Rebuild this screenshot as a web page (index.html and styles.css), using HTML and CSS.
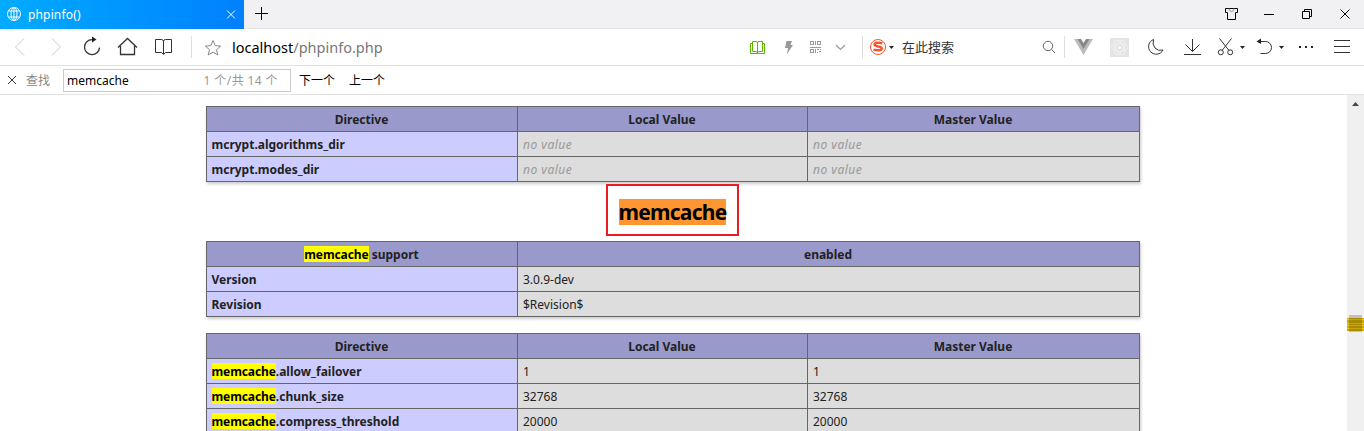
FILE: index.html
```html
<!DOCTYPE html>
<html lang="zh-CN">
<head>
<meta charset="utf-8">
<title>phpinfo()</title>
<link rel="stylesheet" href="styles.css">
</head>
<body>
<div class="browser">
  <header class="tabbar">
    <div class="tab">
      <svg width="28" height="29" viewBox="0 0 28 29" class="white"><circle cx="14" cy="14" r="6.5"/><ellipse cx="14" cy="14" rx="3" ry="6.5"/><path d="M8.5 11h11M8.5 17h11M14 7.5v13"/></svg>
      <span class="tab-title">phpinfo()</span>
      <svg width="22" height="29" viewBox="222 0 22 29" class="white"><path d="M227 10.5l8 8M235 10.5l-8 8"/></svg>
    </div>
    <svg width="36" height="28" viewBox="244 0 36 28" class="crisp black"><path d="M255 13.5h13M261.500 7v13"/></svg>
    <div class="window-buttons">
      <svg width="144" height="28" viewBox="1220 0 144 28" class="black"><path d="M1225.500 8.500h12v4h-2v7h-8v-7h-2z"/><path d="M1229 8.500q0 3 2.500 3t2.500-3" stroke="#999"/><path d="M1264 14.500h10M1302.500 11.500h7v7h-7zM1304.500 11v-1.500h7v7h-1.500"/><path d="M1340.500 9.500l9 9M1349.500 9.500l-9 9"/></svg>
    </div>
  </header>

  <nav class="toolbar">
    <svg width="70" height="36" viewBox="0 29 70 36" class="disabled"><path d="M24 38.500l-8.500 8.500 8.500 8.500M52 38.500l8.500 8.500-8.500 8.500"/></svg>
    <svg width="38" height="36" viewBox="70 29 38 36" class="thick"><path d="M94 39.600h-2a7.500 7.500 0 1 0 7.500 8"/><path d="M92 36.500l4.500 3-4.500 3z" class="fill"/></svg>
    <svg width="38" height="36" viewBox="108 29 38 36" class="thick"><path d="M118 47.500l9.500-9 9.500 9M120.500 46v8.500h14V46"/></svg>
    <svg width="38" height="36" viewBox="146 29 38 36"><path d="M155.500 39.500h6q2 0 2 2 0-2 2-2h6v13h-6l-2 2-2-2h-6zM163.500 41v13"/></svg>
    <svg width="48" height="36" viewBox="184 29 48 36"><path d="M191.500 36v22" class="divider"/><path d="M213 40.500l2.200 5.100 5.500.5-4.200 3.600 1.300 5.300-4.800-2.900-4.800 2.900 1.300-5.300-4.200-3.600 5.500-.5z" stroke="#888"/></svg>
    <span class="address">localhost<span class="path">/phpinfo.php</span></span>
    <svg width="35" height="36" viewBox="740 29 35 36" class="green"><path d="M752.500 51.500v-10h3.500q1.500 0 1.500 1.500 0-1.500 1.500-1.500h3.500v10H759l-1.500 1-1.500-1zM757.500 42v11.500M752 43.500h-1.500v10h14v-10H763"/></svg>
    <svg width="27" height="36" viewBox="775 29 27 36"><path d="M786.500 41h5.500l-1.500 4h2.500l-6 9 1-6h-3z" fill="#999" stroke="none"/></svg>
    <svg width="26" height="36" viewBox="802 29 26 36" class="gray crisp"><path d="M810.500 41.500h3v3h-3zM817.500 41.500h3v3h-3zM810.500 49.500h3v3h-3zM815.500 41v4M810 47.500h11M815.500 49v4M817 49.500h2M819 51.500h2M817 52.500h1M820 49.500h1"/></svg>
    <svg width="34" height="36" viewBox="828 29 34 36" class="gray"><path d="M836 45l4.500 4.500 4.500-4.500" stroke-width="1.200"/></svg>
    <svg width="40" height="36" viewBox="862 29 40 36"><path d="M862.500 36v22" class="divider"/><circle cx="878" cy="47" r="7.500" stroke="#f9552b"/><path d="M882.300 43.300c-2-.8-7.800-1.200-7.800 1.300s7.300 1.300 7.300 3.800-5.500 2.200-8.300 1.100" stroke="#f9552b" stroke-width="2.400"/><path d="M889 46h5l-2.500 3z" fill="#222" stroke="none"/></svg>
    <span class="search-hint">在此搜索</span>
    <svg width="32" height="36" viewBox="1036 29 32 36"><circle cx="1048" cy="46" r="4.700" stroke="#666"/><path d="M1051.500 49.500l3.500 3.500" stroke="#666"/><path d="M1064.500 36v22" class="divider"/></svg>
    <svg width="34" height="36" viewBox="1068 29 34 36"><path d="M1074 39h19l-9.500 16z" fill="#bbb" stroke="none"/><path d="M1077.500 39h3.500l2.500 4 2.500-4h3.500l-6 10z" fill="#888" stroke="none"/><path d="M1081 39h5l-2.500 4z" fill="#f5f5f5" stroke="none"/></svg>
    <svg width="36" height="36" viewBox="1102 29 36 36"><rect x="1110" y="38" width="19" height="19" rx="1" fill="#e4e4e4" stroke="none"/><g stroke="#f1f1f1"><ellipse cx="1119.500" cy="47.500" rx="8" ry="4"/><ellipse cx="1119.500" cy="47.500" rx="8" ry="4" transform="rotate(60 1119.500 47.500)"/><ellipse cx="1119.500" cy="47.500" rx="8" ry="4" transform="rotate(120 1119.500 47.500)"/></g><circle cx="1119.500" cy="47.500" r="1.500" fill="#fff" stroke="none"/></svg>
    <svg width="38" height="36" viewBox="1138 29 38 36"><path d="M1153.500 39.500a7.600 7.600 0 1 0 9.500 10.500q-5 1.500-8-2t-1.500-8.500z"/></svg>
    <svg width="36" height="36" viewBox="1176 29 36 36"><path d="M1192.500 39v12M1185.500 44.500l7 7 7-7M1184 54.500h17"/></svg>
    <svg width="40" height="36" viewBox="1212 29 40 36"><path d="M1219.500 38.500l9.500 12M1231.500 38.500l-9.500 12"/><circle cx="1220.800" cy="52.300" r="2.500"/><circle cx="1230.200" cy="52.300" r="2.500"/><path d="M1240 46h5l-2.500 3z" class="caret"/></svg>
    <svg width="40" height="36" viewBox="1252 29 40 36"><path d="M1258 41.500h7.500a6 6 0 0 1 0 12h-5"/><path d="M1256.500 41.500l4.500-3v5.500z" class="caret"/><path d="M1279 46h5l-2.500 3z" class="caret"/></svg>
    <svg width="32" height="36" viewBox="1292 29 32 36"><path d="M1299 46h2v2h-2zM1305 46h2v2h-2zM1311 46h2v2h-2z" class="caret"/></svg>
    <svg width="40" height="36" viewBox="1324 29 40 36"><path d="M1334 40.500h16M1334 46.500h16M1334 52.500h16"/></svg>
  </nav>

  <div class="findbar">
    <svg width="26" height="28" viewBox="0 66 26 28"><path d="M8 76l8 8M16 76l-8 8"/></svg>
    <span class="find-label">查找</span>
    <div class="find-box"><span class="find-term">memcache</span><span class="find-count">1 个/共 14 个</span></div>
    <span class="find-next">下一个</span>
    <span class="find-prev">上一个</span>
  </div>

  <div class="viewport">
    <main class="page">
      <div class="table three">
        <div class="h">Directive</div><div class="h">Local Value</div><div class="h">Master Value</div>
        <div class="e">mcrypt.algorithms_dir</div><div class="v"><i>no value</i></div><div class="v"><i>no value</i></div>
        <div class="e">mcrypt.modes_dir</div><div class="v"><i>no value</i></div><div class="v"><i>no value</i></div>
      </div>
      <h2 class="module"><span class="current">memcache</span></h2>
      <div class="table two">
        <div class="h"><mark>memcache</mark> support</div><div class="h">enabled</div>
        <div class="e">Version</div><div class="v">3.0.9-dev</div>
        <div class="e">Revision</div><div class="v">$Revision$</div>
      </div>
      <div class="table three last">
        <div class="h">Directive</div><div class="h">Local Value</div><div class="h">Master Value</div>
        <div class="e"><mark>memcache</mark>.allow_failover</div><div class="v">1</div><div class="v">1</div>
        <div class="e"><mark>memcache</mark>.chunk_size</div><div class="v">32768</div><div class="v">32768</div>
        <div class="e"><mark>memcache</mark>.compress_threshold</div><div class="v">20000</div><div class="v">20000</div>
      </div>
    </main>
    <svg class="scrollbar" width="17" height="336" viewBox="1347 95 17 336"><path d="M1352 106h7l-3.500-4z" fill="#444" stroke="none"/><g stroke="none"><path d="M1349 315h13v17h-13z" fill="#c1c1c1"/><path d="M1347 318h17v13h-17z" fill="#d0aa00"/><path d="M1349 318h13v13h-13z" fill="#a88a00"/><path d="M1347 319h17v1h-17zM1347 323h17v1h-17zM1347 325h17v1h-17zM1347 328h17v1h-17z" fill="#f4cf00"/><path d="M1349 319h13v1h-13zM1349 323h13v1h-13zM1349 325h13v1h-13zM1349 328h13v1h-13z" fill="#c8a500"/></g></svg>
  </div>
</div>
</body>
</html>
```
FILE: styles.css
```css
* { box-sizing: border-box; }
body { margin: 0; overflow: hidden; background: #fff; font-family: "Noto Sans", "Noto Sans CJK SC", sans-serif; font-size: 12px; color: #222; }
.browser { width: 1364px; height: 431px; display: flex; flex-direction: column; overflow: hidden; }
svg { display: block; flex: none; fill: none; stroke: #333; stroke-width: 1; }
.white { stroke: #fff; }
.black { stroke: #000; }
.crisp { shape-rendering: crispEdges; }
.disabled { stroke: #ccc; }
.thick { stroke-width: 1.3; }
.gray { stroke: #999; }
.green { stroke: #5cb700; }
.divider { stroke: #ddd; }
.fill, .caret { fill: #222; stroke: none; }

.tabbar { height: 29px; flex: none; display: flex; background: #f1f1f4; border-bottom: 1px solid #e3e3e3; }
.tab { width: 244px; height: 29px; display: flex; align-items: center; background: linear-gradient(90deg, #00acff, #0080ff); color: #fff; }
.tab-title { flex: 1; font-size: 12px; line-height: 29px; letter-spacing: .15px; }
.window-buttons { margin-left: auto; }

.toolbar { height: 37px; flex: none; display: flex; border-bottom: 1px solid #e3e3e3; }
.address { width: 508px; font-size: 14.5px; line-height: 37px; color: #000; white-space: nowrap; }
.path { color: #777; }
.search-hint { width: 134px; font-size: 13px; line-height: 36px; color: #333; }

.findbar { height: 29px; flex: none; display: flex; line-height: 30px; border-bottom: 1px solid #e3e3e3; color: #000; white-space: nowrap; }
.find-label { width: 37px; color: #888; }
.find-box { width: 228px; height: 23px; margin-top: 3px; padding: 0 12px 0 3px; display: flex; justify-content: space-between; line-height: 22px; border: 1px solid #ccc; }
.find-count { color: #999; letter-spacing: .4px; }
.find-next { width: 50px; margin-left: 8px; }

.viewport { height: 336px; display: flex; overflow: hidden; }
.page { width: 1347px; padding: 11px 0 0 206px; }
.scrollbar { background: #f0f0f0; }
.table { width: 934px; display: grid; grid-auto-rows: 24px; gap: 1px; padding: 1px; background: #666; box-shadow: 1px 2px 3px #ccc; line-height: 26px; white-space: nowrap; }
.three { grid-template-columns: 310px 289px 331px; }
.two { grid-template-columns: 310px 621px; }
.last { margin-top: 16px; padding-bottom: 20px; }
.h { background: #99c; text-align: center; font-weight: 700; padding-right: 1px; }
.e { background: #ccf; padding-left: 4.5px; font-weight: 700; }
.v { background: #ddd; padding-left: 5px; }
.v i { color: #999; letter-spacing: .5px; }
mark { display: inline-block; height: 16px; line-height: 18px; background: #ff0; color: #000; letter-spacing: -.1px; }
.module { width: 133px; height: 52px; margin: 2px 0 5px 400px; padding-top: 3px; border: 2px solid #ed1c24; display: flex; align-items: center; justify-content: center; font-size: 21px; line-height: 26px; letter-spacing: -.75px; }
.current { background: #ff9632; color: #000; height: 26px; }
```
